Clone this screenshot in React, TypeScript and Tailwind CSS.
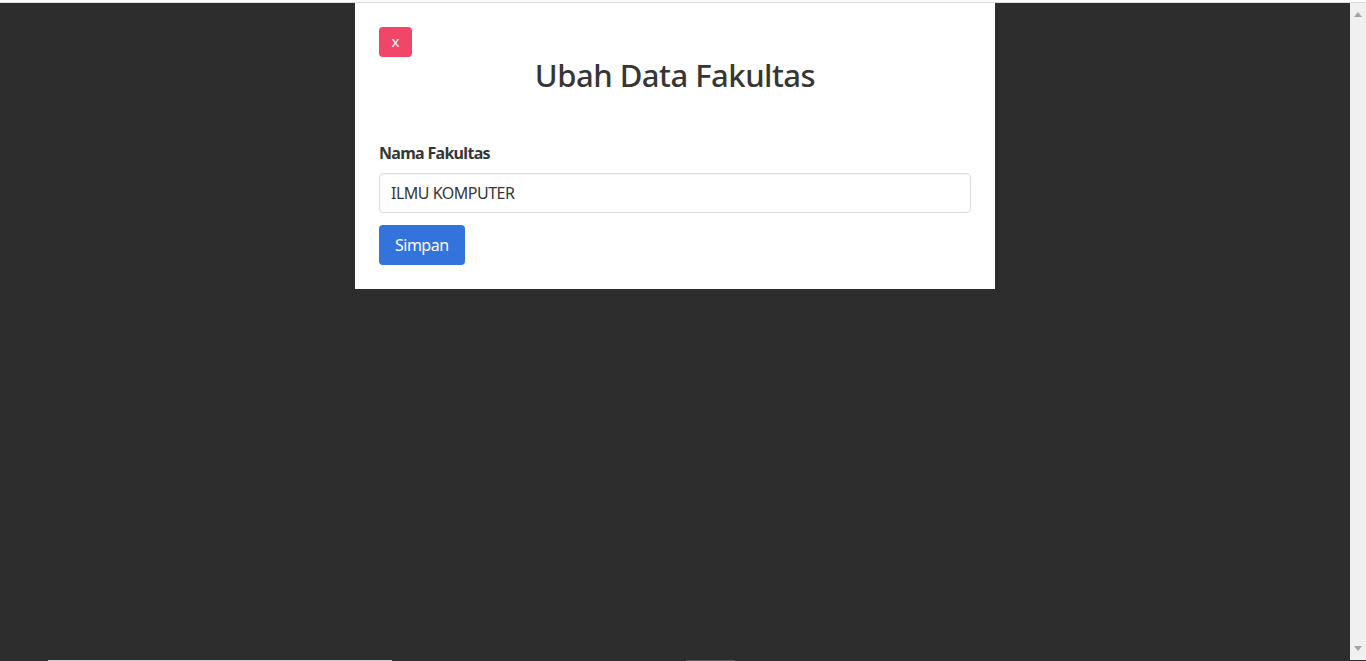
import { useState } from 'react';

export default function App() {
  const [namaFakultas, setNamaFakultas] = useState('ILMU KOMPUTER');

  return (
    <div
      className="h-screen flex flex-col bg-[#2d2d2d] overflow-hidden"
      style={{ fontFamily: '"Noto Sans", "Open Sans", sans-serif' }}
    >
      {/* browser top edge */}
      <div className="h-[2px] bg-[#fdfdfd]" />
      <div className="h-px bg-[#dadada]" />

      <div className="flex flex-1 min-h-0">
        <div className="flex-1 flex flex-col">
          {/* Modal */}
          <div className="w-[640px] mx-auto bg-white p-6">
            <button className="w-[33px] h-[30px] bg-[#f14668] rounded-[4px] text-white text-[15px] leading-none flex items-center justify-center pb-[2px]">
              x
            </button>
            <h1 className="text-center text-[31px] leading-[36px] font-medium tracking-[-0.5px] text-[#363636]">
              Ubah Data Fakultas
            </h1>

            <form className="mt-12" onSubmit={(e) => e.preventDefault()}>
              <label className="block text-base leading-6 font-bold tracking-[-0.7px] text-[#363636] mb-2">
                Nama Fakultas
              </label>
              <input
                value={namaFakultas}
                onChange={(e) => setNamaFakultas(e.target.value)}
                className="block w-full h-10 px-[11px] border border-[#dbdbdb] rounded-[4px] text-base tracking-[-0.5px] text-[#363636] shadow-[inset_0_1px_2px_rgba(10,10,10,0.05)] outline-none"
              />
              <button
                type="submit"
                className="mt-3 h-10 px-4 bg-[#3273dc] rounded-[4px] text-white text-base tracking-[-0.5px]"
              >
                Simpan
              </button>
            </form>
          </div>
        </div>

        {/* scrollbar */}
        <div className="w-4 bg-[#f0f0f0] flex flex-col items-center justify-between py-[9px]">
          <svg width="8" height="5" viewBox="0 0 8 5">
            <path d="M4 0 L8 5 L0 5 Z" fill="#a3a3a3" />
          </svg>
          <svg width="8" height="5" viewBox="0 0 8 5">
            <path d="M0 0 L8 0 L4 5 Z" fill="#a3a3a3" />
          </svg>
        </div>
      </div>

      {/* bottom edge */}
      <div className="h-px flex">
        <div className="ml-[48px] w-[344px] bg-[#cfcfcf]" />
        <div className="ml-[294px] w-[49px] bg-[#5a5a5a]" />
      </div>
    </div>
  );
}
